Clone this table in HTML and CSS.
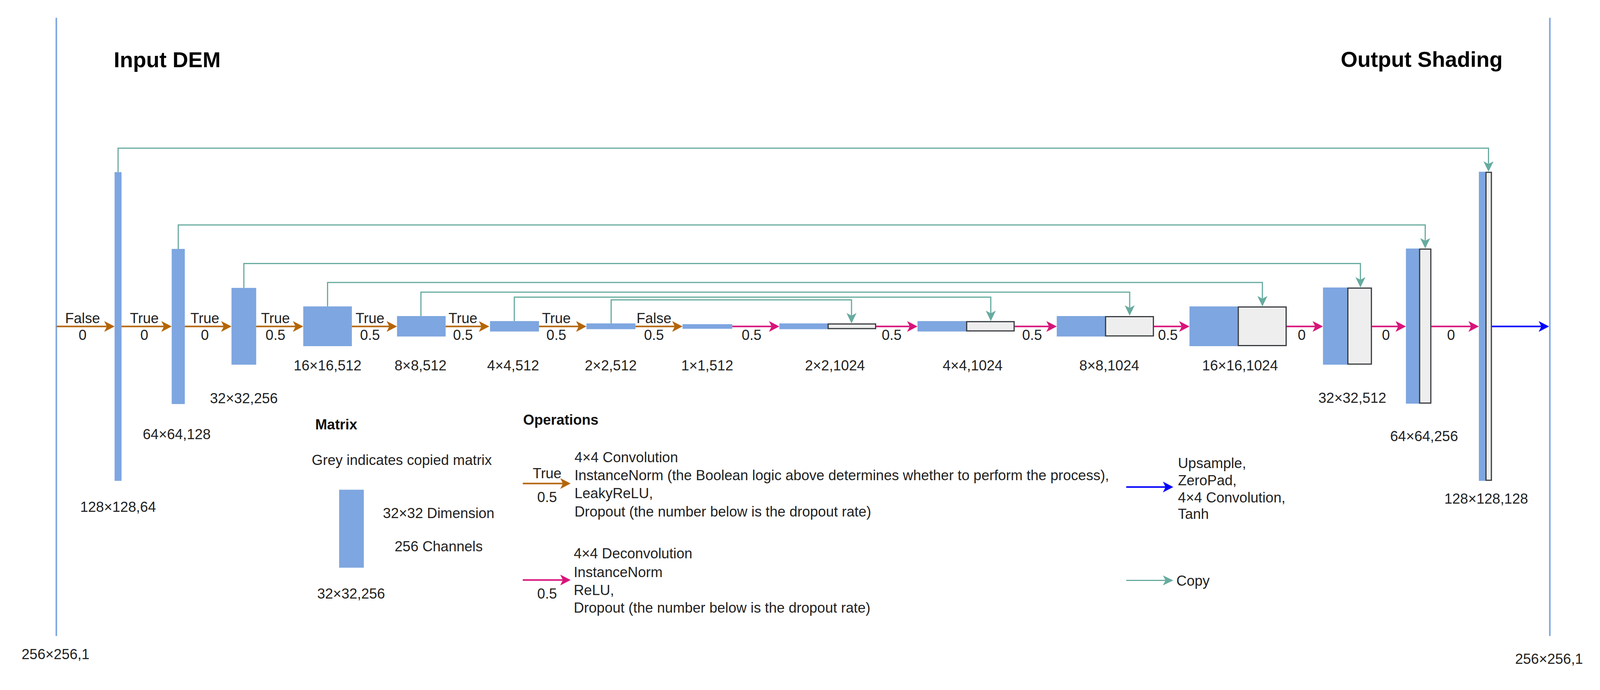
FILE: index.html
```html
<!DOCTYPE html>
<html lang="en">
<head>
<meta charset="utf-8">
<title>U-Net Generator Architecture</title>
<link rel="stylesheet" href="styles.css">
</head>
<body>
<svg class="canvas" viewBox="0 0 4147 1766" preserveAspectRatio="xMinYMin meet" xmlns="http://www.w3.org/2000/svg">
  <defs>
    <marker id="hBrown" markerUnits="userSpaceOnUse" markerWidth="28" markerHeight="28" refX="7" refY="14" orient="auto" viewBox="0 0 28 28">
      <path class="h-brown" d="M0,0 L27,14 L0,28 L7,14 Z"/>
    </marker>
    <marker id="hPink" markerUnits="userSpaceOnUse" markerWidth="28" markerHeight="28" refX="7" refY="14" orient="auto" viewBox="0 0 28 28">
      <path class="h-pink" d="M0,0 L27,14 L0,28 L7,14 Z"/>
    </marker>
    <marker id="hBlue" markerUnits="userSpaceOnUse" markerWidth="28" markerHeight="28" refX="7" refY="14" orient="auto" viewBox="0 0 28 28">
      <path class="h-blue" d="M0,0 L27,14 L0,28 L7,14 Z"/>
    </marker>
    <marker id="hTeal" markerUnits="userSpaceOnUse" markerWidth="28" markerHeight="26" refX="7" refY="13" orient="auto" viewBox="0 0 28 26">
      <path class="h-teal" d="M0,0 L27,13 L0,26 L7,13 Z"/>
    </marker>
  </defs>

  <!-- frame lines -->
  <rect class="frame" x="144" y="46" width="4" height="1602"/>
  <rect class="frame" x="4015" y="46" width="4" height="1602"/>

  <!-- titles -->
  <text class="t title" x="295" y="174">Input DEM</text>
  <text class="t title" x="3475" y="173">Output Shading</text>

  <!-- copy connections -->
  <polyline class="edge teal" points="306,446 306,384 3858,384 3858,425"/>
  <polyline class="edge teal" points="462,645 462,583 3694,583 3694,624"/>
  <polyline class="edge teal" points="632,746 632,683 3526,683 3526,725"/>
  <polyline class="edge teal" points="849,794 849,732 3272,732 3272,774"/>
  <polyline class="edge teal" points="1091,819 1091,757 2928,757 2928,798"/>
  <polyline class="edge teal" points="1333,832 1333,770 2568,770 2568,812"/>
  <polyline class="edge teal" points="1584,838 1584,777 2207,777 2207,818"/>

  <!-- encoder arrows -->
  <line class="edge brown" x1="147" y1="846" x2="277" y2="846"/>
  <line class="edge brown" x1="315" y1="846" x2="425" y2="846"/>
  <line class="edge brown" x1="479" y1="846" x2="580" y2="846"/>
  <line class="edge brown" x1="664" y1="846" x2="766" y2="846"/>
  <line class="edge brown" x1="912" y1="846" x2="1009" y2="846"/>
  <line class="edge brown" x1="1155" y1="846" x2="1248" y2="846"/>
  <line class="edge brown" x1="1397" y1="846" x2="1500" y2="846"/>
  <line class="edge brown" x1="1647" y1="846" x2="1749" y2="846"/>

  <!-- decoder arrows -->
  <line class="edge pink" x1="1898" y1="846" x2="2000" y2="846"/>
  <line class="edge pink" x1="2271" y1="846" x2="2358" y2="846"/>
  <line class="edge pink" x1="2630" y1="846" x2="2719" y2="846"/>
  <line class="edge pink" x1="2991" y1="846" x2="3063" y2="846"/>
  <line class="edge pink" x1="3335" y1="846" x2="3409" y2="846"/>
  <line class="edge pink" x1="3556" y1="846" x2="3624" y2="846"/>
  <line class="edge pink" x1="3710" y1="846" x2="3813" y2="846"/>
  <line class="edge blue" x1="3867" y1="846" x2="3995" y2="846"/>

  <!-- encoder matrices -->
  <rect class="bar" x="297" y="446" width="18" height="800"/>
  <rect class="bar" x="445" y="645" width="34" height="402"/>
  <rect class="bar" x="600" y="746" width="64" height="199"/>
  <rect class="bar" x="786" y="794" width="126" height="103"/>
  <rect class="bar" x="1029" y="819" width="126" height="53"/>
  <rect class="bar" x="1270" y="832" width="127" height="27"/>
  <rect class="bar" x="1520" y="838" width="127" height="15"/>
  <rect class="bar" x="1769" y="840" width="129" height="12"/>

  <!-- decoder matrices -->
  <rect class="bar" x="2020" y="838" width="126" height="15"/>
  <rect class="copied" x="2146.5" y="839.5" width="123" height="12"/>
  <rect class="bar" x="2378" y="832" width="127" height="27"/>
  <rect class="copied" x="2505.5" y="833.5" width="123" height="24"/>
  <rect class="bar" x="2739" y="819" width="126" height="53"/>
  <rect class="copied" x="2865.5" y="820.5" width="124" height="50"/>
  <rect class="bar" x="3083" y="794" width="126" height="103"/>
  <rect class="copied" x="3209.5" y="795.5" width="124" height="100"/>
  <rect class="bar" x="3429" y="745" width="64" height="200"/>
  <rect class="copied" x="3493.5" y="746.5" width="61" height="197"/>
  <rect class="bar" x="3644" y="644" width="35" height="402"/>
  <rect class="copied" x="3679.5" y="645.5" width="29" height="399"/>
  <rect class="bar" x="3833" y="445" width="18" height="801"/>
  <rect class="copied" x="3851.5" y="446.5" width="14" height="798"/>

  <!-- arrow labels -->
  <text class="t c" x="214" y="837">False</text><text class="t c" x="214" y="881">0</text>
  <text class="t c" x="374" y="837">True</text><text class="t c" x="374" y="881">0</text>
  <text class="t c" x="531" y="837">True</text><text class="t c" x="531" y="881">0</text>
  <text class="t c" x="714" y="837">True</text><text class="t c" x="714" y="881">0.5</text>
  <text class="t c" x="959" y="837">True</text><text class="t c" x="959" y="881">0.5</text>
  <text class="t c" x="1200" y="837">True</text><text class="t c" x="1200" y="881">0.5</text>
  <text class="t c" x="1442" y="837">True</text><text class="t c" x="1442" y="881">0.5</text>
  <text class="t c" x="1695" y="837">False</text><text class="t c" x="1695" y="881">0.5</text>
  <text class="t c" x="1948" y="881">0.5</text>
  <text class="t c" x="2311" y="881">0.5</text>
  <text class="t c" x="2675" y="881">0.5</text>
  <text class="t c" x="3027" y="881">0.5</text>
  <text class="t c" x="3374" y="881">0</text>
  <text class="t c" x="3592" y="881">0</text>
  <text class="t c" x="3761" y="881">0</text>

  <!-- dimension labels -->
  <text class="t c" x="306" y="1326">128×128,64</text>
  <text class="t c" x="458" y="1138">64×64,128</text>
  <text class="t c" x="632" y="1045">32×32,256</text>
  <text class="t c" x="849" y="960">16×16,512</text>
  <text class="t c" x="1090" y="960">8×8,512</text>
  <text class="t c" x="1330" y="960">4×4,512</text>
  <text class="t c" x="1583" y="960">2×2,512</text>
  <text class="t c" x="1833" y="960">1×1,512</text>
  <text class="t c" x="2164" y="960">2×2,1024</text>
  <text class="t c" x="2521" y="960">4×4,1024</text>
  <text class="t c" x="2875" y="960">8×8,1024</text>
  <text class="t c" x="3214" y="960">16×16,1024</text>
  <text class="t c" x="3505" y="1044">32×32,512</text>
  <text class="t c" x="3691" y="1143">64×64,256</text>
  <text class="t c" x="3852" y="1305">128×128,128</text>
  <text class="t" x="56" y="1708">256×256,1</text>
  <text class="t" x="3927" y="1720">256×256,1</text>

  <!-- legend: matrix -->
  <text class="t b" x="817" y="1113">Matrix</text>
  <text class="t" x="808" y="1205">Grey indicates copied matrix</text>
  <rect class="bar" x="879" y="1269" width="64" height="202"/>
  <text class="t c" x="1137" y="1343">32×32 Dimension</text>
  <text class="t c" x="1137" y="1429">256 Channels</text>
  <text class="t c" x="910" y="1551">32×32,256</text>

  <!-- legend: operations -->
  <text class="t b" x="1356" y="1101">Operations</text>
  <line class="edge brown" x1="1355" y1="1253" x2="1459" y2="1253"/>
  <text class="t c" x="1418" y="1239">True</text>
  <text class="t c" x="1418" y="1301">0.5</text>
  <text class="t" x="1489" y="1198">4×4 Convolution</text>
  <text class="t" x="1489" y="1244">InstanceNorm (the Boolean logic above determines whether to perform the process),</text>
  <text class="t" x="1489" y="1291">LeakyReLU,</text>
  <text class="t" x="1489" y="1338">Dropout (the number below is the dropout rate)</text>

  <line class="edge pink" x1="1355" y1="1503" x2="1459" y2="1503"/>
  <text class="t c" x="1418" y="1551">0.5</text>
  <text class="t" x="1487" y="1447">4×4 Deconvolution</text>
  <text class="t" x="1487" y="1495">InstanceNorm</text>
  <text class="t" x="1487" y="1542">ReLU,</text>
  <text class="t" x="1487" y="1588">Dropout (the number below is the dropout rate)</text>

  <line class="edge blue" x1="2919" y1="1262" x2="3021" y2="1262"/>
  <text class="t" x="3053" y="1213">Upsample,</text>
  <text class="t" x="3053" y="1257">ZeroPad,</text>
  <text class="t" x="3053" y="1302">4×4 Convolution,</text>
  <text class="t" x="3053" y="1345">Tanh</text>

  <line class="edge teal" x1="2919" y1="1504" x2="3021" y2="1504"/>
  <text class="t" x="3049" y="1518">Copy</text>
</svg>
</body>
</html>
```
FILE: styles.css
```css
html, body {
  margin: 0;
  padding: 0;
  background: #ffffff;
  overflow: hidden;
}

.canvas {
  display: block;
  width: 100vw;
  height: 100vh;
  max-width: 4147px;
  max-height: 1766px;
}

.t {
  font-family: "Liberation Sans", Arial, sans-serif;
  font-size: 37px;
  fill: #222222;
}

.c {
  text-anchor: middle;
}

.b {
  font-weight: bold;
  fill: #111111;
}

.title {
  font-size: 56px;
  font-weight: bold;
  fill: #000000;
}

.frame {
  fill: #7ea6e0;
}

.bar {
  fill: #7ea6e0;
}

.copied {
  fill: #eeeeee;
  stroke: #36393d;
  stroke-width: 3;
}

.edge {
  fill: none;
  stroke-width: 4;
}

.brown {
  stroke: #b46504;
  marker-end: url(#hBrown);
}

.pink {
  stroke: #d8137a;
  marker-end: url(#hPink);
}

.blue {
  stroke: #0000ff;
  marker-end: url(#hBlue);
}

.teal {
  stroke: #67ab9f;
  stroke-width: 3;
  marker-end: url(#hTeal);
}

.h-brown { fill: #b46504; }
.h-pink { fill: #d8137a; }
.h-blue { fill: #0000ff; }
.h-teal { fill: #67ab9f; }
```
